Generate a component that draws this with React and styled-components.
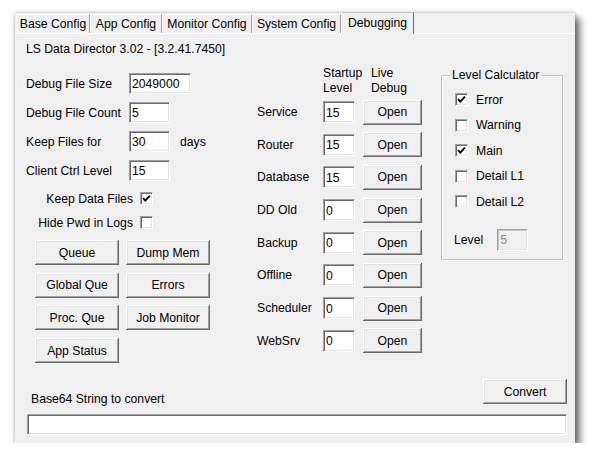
import React from 'react';
import styled, { createGlobalStyle } from 'styled-components';

const GlobalStyle = createGlobalStyle`
  html, body {
    margin: 0;
    padding: 0;
    background: #ffffff;
  }
  body {
    font-family: "Liberation Sans", Arial, sans-serif;
    font-size: 12.2px;
    color: #000;
  }
`;

function Check({ checked }) {
  return (
    <CheckBox>
      {checked && (
        <svg width="11" height="11" viewBox="0 0 11 11">
          <path d="M2 5.2 L4.3 7.6 L9 2.6" fill="none" stroke="#000" strokeWidth="1.9" />
        </svg>
      )}
    </CheckBox>
  );
}

function App() {
  const tabs = [
    { name: 'Base Config', width: 74 },
    { name: 'App Config', width: 72 },
    { name: 'Monitor Config', width: 90 },
    { name: 'System Config', width: 89 },
    { name: 'Debugging', width: 73, active: true },
  ];

  const fields = [
    { label: 'Debug File Size', value: '2049000', width: 62 },
    { label: 'Debug File Count', value: '5', width: 41 },
    { label: 'Keep Files for', value: '30', width: 41, suffix: 'days' },
    { label: 'Client Ctrl Level', value: '15', width: 41 },
  ];

  const services = [
    { name: 'Service', level: '15' },
    { name: 'Router', level: '15' },
    { name: 'Database', level: '15' },
    { name: 'DD Old', level: '0' },
    { name: 'Backup', level: '0' },
    { name: 'Offline', level: '0' },
    { name: 'Scheduler', level: '0' },
    { name: 'WebSrv', level: '0' },
  ];

  const levels = [
    { name: 'Error', checked: true },
    { name: 'Warning', checked: false },
    { name: 'Main', checked: true },
    { name: 'Detail L1', checked: false },
    { name: 'Detail L2', checked: false },
  ];

  const actions = ['Queue', 'Dump Mem', 'Global Que', 'Errors', 'Proc. Que', 'Job Monitor', 'App Status'];

  return (
    <>
      <GlobalStyle />
      <Window>
        <TabStrip>
          {tabs.map((tab) => (
            <Tab key={tab.name} $width={tab.width} $active={tab.active}>
              {tab.name}
            </Tab>
          ))}
        </TabStrip>
        <Panel>
          <Title>LS Data Director 3.02 - [3.2.41.7450]</Title>
          <Columns>
            <LeftCol>
              <Fields>
                {fields.map((f) => (
                  <FieldRow key={f.label}>
                    <FieldLabel>{f.label}</FieldLabel>
                    <TextBox $width={f.width}>{f.value}</TextBox>
                    {f.suffix && <Suffix>{f.suffix}</Suffix>}
                  </FieldRow>
                ))}
              </Fields>
              <CheckRow>
                <span>Keep Data Files</span>
                <Check checked />
              </CheckRow>
              <CheckRow>
                <span>Hide Pwd in Logs</span>
                <Check />
              </CheckRow>
              <ButtonGrid>
                {actions.map((a) => (
                  <Button key={a}>{a}</Button>
                ))}
              </ButtonGrid>
            </LeftCol>

            <MidCol>
              <MidHeader>
                <span />
                <span>
                  Startup
                  <br />
                  Level
                </span>
                <HeaderLive>
                  Live
                  <br />
                  Debug
                </HeaderLive>
              </MidHeader>
              <ServiceList>
                {services.map((s) => (
                  <ServiceRow key={s.name}>
                    <span>{s.name}</span>
                    <TextBox $width={32} $height={22}>
                      {s.level}
                    </TextBox>
                    <Button $width={59}>Open</Button>
                  </ServiceRow>
                ))}
              </ServiceList>
            </MidCol>

            <GroupBox>
              <Legend>Level Calculator</Legend>
              <LevelList>
                {levels.map((l) => (
                  <LevelRow key={l.name}>
                    <Check checked={l.checked} />
                    <span>{l.name}</span>
                  </LevelRow>
                ))}
              </LevelList>
              <LevelResult>
                <span>Level</span>
                <TextBox $width={31} $height={22} $disabled>
                  5
                </TextBox>
              </LevelResult>
            </GroupBox>
          </Columns>

          <BottomArea>
            <BottomRow>
              <BottomLabel>Base64 String to convert</BottomLabel>
              <Button $width={84}>Convert</Button>
            </BottomRow>
            <TextBox $width="100%">{''}</TextBox>
          </BottomArea>
        </Panel>
      </Window>
    </>
  );
}

export default App;

const Window = styled.div`
  box-sizing: border-box;
  margin: 13px 0 0 15px;
  width: 560px;
  height: 430px;
  background: #f0f0f0;
  display: flex;
  flex-direction: column;
  box-shadow: 5px 5px 7px rgba(0, 0, 0, 0.55), 0 0 4px rgba(0, 0, 0, 0.3);
`;

const TabStrip = styled.div`
  display: flex;
  align-items: flex-end;
  height: 20px;
  padding-left: 1px;
  border-bottom: 1px solid #ffffff;
`;

const Tab = styled.div`
  box-sizing: border-box;
  width: ${(p) => p.$width}px;
  height: ${(p) => (p.$active ? 22 : 19)}px;
  margin-bottom: ${(p) => (p.$active ? -1 : 0)}px;
  display: flex;
  align-items: center;
  justify-content: center;
  padding-bottom: ${(p) => (p.$active ? 2 : 0)}px;
  background: #f0f0f0;
  border-top: 1px solid ${(p) => (p.$active ? '#c8c8c8' : '#ffffff')};
  border-left: 1px solid #ffffff;
  border-right: 1px solid ${(p) => (p.$active ? '#6e6e6e' : '#a0a0a0')};
  white-space: nowrap;
`;

const Panel = styled.div`
  flex: 1;
  display: flex;
  flex-direction: column;
  padding: 8px 8px 8px 11px;
`;

const Title = styled.div`
  line-height: 14px;
`;

const Columns = styled.div`
  display: flex;
  margin-top: 8px;
`;

const LeftCol = styled.div`
  width: 231px;
  display: flex;
  flex-direction: column;
  padding-top: 9px;
`;

const Fields = styled.div`
  display: flex;
  flex-direction: column;
  gap: 8px;
`;

const FieldRow = styled.div`
  display: flex;
  align-items: center;
  height: 21px;
`;

const FieldLabel = styled.span`
  width: 103px;
  white-space: nowrap;
`;

const Suffix = styled.span`
  margin-left: 10px;
`;

const TextBox = styled.div`
  box-sizing: border-box;
  width: ${(p) => (typeof p.$width === 'number' ? `${p.$width}px` : p.$width)};
  height: ${(p) => p.$height || 21}px;
  padding: 1px 0 0 2px;
  display: flex;
  align-items: center;
  background: ${(p) => (p.$disabled ? '#f0f0f0' : '#ffffff')};
  color: ${(p) => (p.$disabled ? '#8a8a8a' : '#000')};
  border-top: 1px solid #a0a0a0;
  border-left: 1px solid #a0a0a0;
  border-right: 1px solid #ffffff;
  border-bottom: 1px solid #ffffff;
  box-shadow: inset 1px 1px 0 ${(p) => (p.$disabled ? '#c8c8c8' : '#696969')},
    inset -1px -1px 0 #e3e3e3;
`;

const CheckRow = styled.div`
  display: flex;
  justify-content: flex-end;
  align-items: center;
  gap: 7px;
  width: 127px;
  height: 13px;
  margin-top: 11px;
  white-space: nowrap;
`;

const CheckBox = styled.span`
  box-sizing: border-box;
  width: 13px;
  height: 13px;
  flex: none;
  display: flex;
  align-items: center;
  justify-content: center;
  background: #ffffff;
  border-top: 1px solid #a0a0a0;
  border-left: 1px solid #a0a0a0;
  border-right: 1px solid #ffffff;
  border-bottom: 1px solid #ffffff;
  box-shadow: inset 1px 1px 0 #696969, inset -1px -1px 0 #e3e3e3;
`;

const ButtonGrid = styled.div`
  display: grid;
  grid-template-columns: 84px 84px;
  column-gap: 7px;
  row-gap: 7.7px;
  margin: 11px 0 0 9px;
`;

const Button = styled.button`
  box-sizing: border-box;
  width: ${(p) => (p.$width ? `${p.$width}px` : 'auto')};
  height: 25px;
  padding: 0;
  font: inherit;
  color: #000;
  background: #f0f0f0;
  border: none;
  box-shadow: inset -1px -1px 0 #696969, inset 1px 1px 0 #ffffff,
    inset -2px -2px 0 #a0a0a0, inset 2px 2px 0 #e3e3e3;
`;

const MidCol = styled.div`
  width: 184px;
  display: flex;
  flex-direction: column;
`;

const MidHeader = styled.div`
  display: grid;
  grid-template-columns: 66px 40px 59px;
  line-height: 15px;
  margin-top: 2px;
  white-space: nowrap;
`;

const HeaderLive = styled.span`
  padding-left: 8px;
`;

const ServiceList = styled.div`
  display: flex;
  flex-direction: column;
  gap: 7.7px;
  margin-top: 3.5px;
`;

const ServiceRow = styled.div`
  display: grid;
  grid-template-columns: 66px 40px 59px;
  align-items: center;
  height: 25px;
`;

const GroupBox = styled.fieldset`
  box-sizing: border-box;
  width: 122px;
  height: 192px;
  margin: 4px 0 0 0;
  padding: 11px 0 0 13px;
  border: 1px solid #c0c0c0;
  box-shadow: inset 1px 1px 0 #ffffff, 1px 1px 0 #ffffff;
  min-inline-size: 0;
`;

const Legend = styled.legend`
  margin-left: -5px;
  padding: 0 2px;
  line-height: 14px;
`;

const LevelList = styled.div`
  display: flex;
  flex-direction: column;
  gap: 12.5px;
`;

const LevelRow = styled.div`
  display: flex;
  align-items: center;
  gap: 8px;
  height: 13px;
`;

const LevelResult = styled.div`
  display: flex;
  align-items: center;
  gap: 14px;
  margin: 20.5px 0 0 -1px;
`;

const BottomArea = styled.div`
  margin-top: auto;
  padding: 0 0 0 1px;
`;

const BottomRow = styled.div`
  display: flex;
  justify-content: space-between;
  align-items: flex-start;
  margin-bottom: 8px;
`;

const BottomLabel = styled.span`
  padding: 13px 0 0 4px;
  line-height: 14px;
`;
